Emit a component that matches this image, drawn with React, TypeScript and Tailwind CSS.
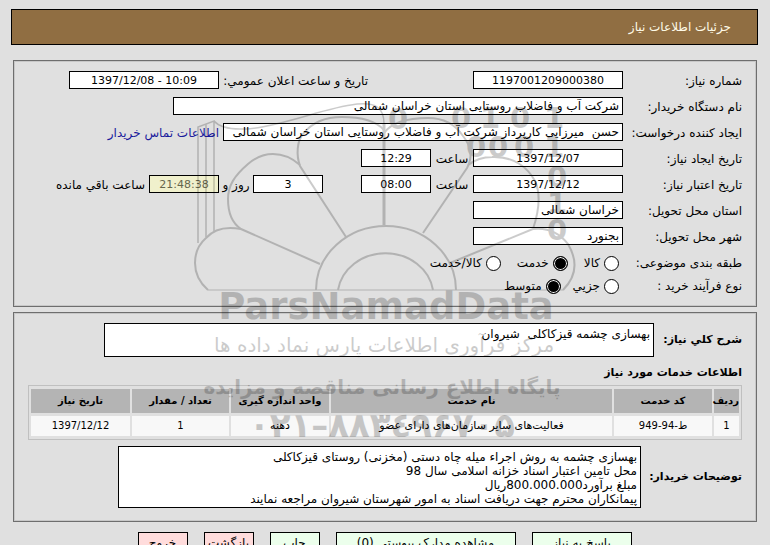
import type { ReactNode } from "react";

const box = "h-[18px] shrink-0 border border-black bg-white px-[3px] leading-4 text-black outline-none";
const textBox = `${box} text-[12px]`;
const numberBox = `${box} text-center text-[11px]`;
const area =
  "resize-none overflow-hidden border border-black bg-white px-[3px] text-[12px] leading-[14px] text-black outline-none";
const panel = "ml-0.5 mr-px border border-[#6e6e6e] px-[14px] pt-2.5 shadow-[inset_0_0_0_1px_#c8c8c8]";

function Row({ id, label, children }: { id: string; label: string; children: ReactNode }) {
  return (
    <div className="flex h-[18px] items-center">
      <label htmlFor={id} className="w-[119px] shrink-0 pt-0.5 whitespace-nowrap">
        {label}
      </label>
      {children}
    </div>
  );
}

function Radio({ name, label, checked }: { name: string; label: string; checked?: boolean }) {
  return (
    <label className="flex items-center gap-1 whitespace-nowrap">
      <input
        type="radio"
        name={name}
        defaultChecked={checked}
        className="size-[15px] shrink-0 appearance-none rounded-full border border-black bg-white checked:bg-black checked:shadow-[inset_0_0_0_1px_white]"
      />
      {label}
    </label>
  );
}

function Watermark() {
  return (
    <svg
      className="pointer-events-none absolute top-[95px] left-[190px] opacity-20"
      width="400"
      height="350"
      viewBox="190 95 400 350"
      direction="ltr"
      aria-hidden="true"
    >
      <g fill="none" stroke="black" strokeWidth="2">
        <path d="M208 290H563" strokeWidth="1" />
        <path d="M316 290A70 64 0 0 1 456 290M338 290A48 43 0 0 1 433 290" />
        <path d="M384 225V124" strokeWidth="3" />
        <path d="M346 237L300 166C296 155 297 141 303 134C313 121 327 117 342 117C360 117 376 121 384 130" />
        <path d="M423 233L467 168C473 157 471 146 463 136C455 124 442 118 428 118C410 118 392 122 384 133" />
        <path d="M300 165C291 157 283 154 273 154C262 154 255 158 248 164C234 176 228 186 228 199C228 213 232 223 241 229L320 264" />
        <path d="M468 165C476 159 484 157 492 157C514 156 528 168 535 181C541 194 539 211 533 229L450 263" />
        <path d="M241 229C225 226 213 230 206 238C198 245 195 254 195 263C195 275 200 283 208 290" />
        <path d="M533 229C550 227 561 235 568 244C578 261 576 277 563 290" />
        <path d="M198 243V127L214 121V231M206 237V124M214 121C222 130 238 131 262 127C300 120 325 108 357 104C376 102 384 108 384 124" strokeWidth="1.5" />
      </g>
      <g fill="black" className="font-['DejaVu_Sans'] font-bold">
        <g fontSize="29">
          <text x="388" y="129">0</text>
          <text x="451" y="128">0</text>
          <text x="480" y="128">1</text>
          <text x="510" y="128">0</text>
          <text x="544" y="128">1</text>
          <text x="466" y="157">0</text>
          <text x="488" y="157">0</text>
          <text x="514" y="157">0</text>
          <text x="544" y="157">1</text>
          <text x="547" y="187">0</text>
          <text x="547" y="213">1</text>
          <text x="547" y="240">0</text>
        </g>
        <text x="386" y="319" fontSize="37" textAnchor="middle">ParsNamadData</text>
        <text x="384" y="352" fontSize="20" textAnchor="middle" direction="rtl" fontWeight="400">
          مرکز فرآوری اطلاعات پارس نماد داده ها
        </text>
        <text x="382" y="394" fontSize="20" textAnchor="middle" direction="rtl">
          پایگاه اطلاع رسانی مناقصه و مزایده
        </text>
        <text x="382" y="437" fontSize="34" textAnchor="middle">۰۲۱–۸۸۳٤۹۶۷۰۵</text>
      </g>
    </svg>
  );
}

const columns = [
  { title: "رديف", value: "1", width: "w-[25px]", size: "text-[10px]" },
  { title: "کد خدمت", value: "ط-94-949", width: "w-[98px]", size: "text-[10px]" },
  { title: "نام خدمت", value: "فعالیت‌های سایر سازمان‌های دارای عضو", width: "", size: "text-[11px]" },
  { title: "واحد اندازه گیری", value: "دهنه", width: "w-[98px]", size: "text-[11px]" },
  { title: "تعداد / مقدار", value: "1", width: "w-[97px]", size: "text-[10px]" },
  { title: "تاریخ نیاز", value: "1397/12/12", width: "w-[99px]", size: "text-[10px]" },
];

const green = "bg-[#ecffec]";
const pink = "bg-[#ffdcdc]";
const actions = [
  { text: "پاسخ به نیاز", style: `w-[100px] ${green}` },
  { text: "مشاهده مدارک پیوستی (0)", style: `w-[180px] ${green}` },
  { text: "چاپ", style: `w-[50px] ${green}` },
  { text: "بازگشت", style: `w-[50px] ${pink}` },
  { text: "خروج", style: `w-[50px] ${pink}` },
];

export default function App() {
  return (
    <main
      dir="rtl"
      className="relative h-screen overflow-hidden bg-[#e0e0e0] pt-[9px] pr-3 pl-[11px] font-['DejaVu_Sans',sans-serif] text-[12px] leading-4 text-black"
    >
      <h1 className="flex h-9 items-center border border-black bg-[#906e42] px-[26px] text-[#fffbe8]">
        جزئیات اطلاعات نیاز
      </h1>

      <section className={`${panel} mt-[15px] flex h-[247px] flex-col gap-2`}>
        <Row id="number" label="شماره نیاز:">
          <input id="number" readOnly className={`${numberBox} w-[150px]`} value="1197001209000380" />
          <label htmlFor="announce" className="ms-[105px] w-[149px] pt-0.5 whitespace-nowrap">
            تاریخ و ساعت اعلان عمومي:
          </label>
          <input id="announce" dir="ltr" readOnly className={`${numberBox} w-[150px]`} value="1397/12/08 - 10:09" />
        </Row>
        <Row id="buyer" label="نام دستگاه خریدار:">
          <input id="buyer" readOnly className={`${textBox} w-[450px]`} value="شرکت آب و فاضلاب روستایی استان خراسان شمالی" />
        </Row>
        <Row id="creator" label="ایجاد کننده درخواست:">
          <input id="creator" readOnly className={`${textBox} w-[400px]`} value="حسن  میرزایی کارپرداز شرکت آب و فاضلاب روستایی استان خراسان شمالی" />
          <a href="#contact" className="ms-1 pt-0.5 whitespace-nowrap text-[#1a1a9c]">
            اطلاعات تماس خریدار
          </a>
        </Row>
        <Row id="created" label="تاریخ ایجاد نیاز:">
          <input id="created" dir="ltr" readOnly className={`${numberBox} w-[150px]`} value="1397/12/07" />
          <label htmlFor="createdTime" className="w-[42px] pt-0.5 text-center">ساعت</label>
          <input id="createdTime" dir="ltr" readOnly className={`${numberBox} w-[70px]`} value="12:29" />
        </Row>
        <Row id="expires" label="تاریخ اعتبار نیاز:">
          <input id="expires" dir="ltr" readOnly className={`${numberBox} w-[150px]`} value="1397/12/12" />
          <label htmlFor="expiresTime" className="w-[42px] pt-0.5 text-center">ساعت</label>
          <input id="expiresTime" dir="ltr" readOnly className={`${numberBox} w-[70px]`} value="08:00" />
          <input id="days" readOnly className={`${numberBox} ms-[38px] w-[70px]`} value="3" />
          <label htmlFor="days" className="w-[34px] pt-0.5 text-center whitespace-nowrap">روز و</label>
          <input
            id="remaining"
            dir="ltr"
            readOnly
            className="h-[18px] w-[70px] shrink-0 border border-black bg-[#f0f0cc] px-[3px] text-center text-[11px] text-[#66664c] outline-none"
            value="21:48:38"
          />
          <label htmlFor="remaining" className="ms-1 pt-0.5 whitespace-nowrap">ساعت باقي مانده</label>
        </Row>
        <Row id="province" label="استان محل تحویل:">
          <input id="province" readOnly className={`${textBox} w-[150px]`} value="خراسان شمالی" />
        </Row>
        <Row id="city" label="شهر محل تحویل:">
          <input id="city" readOnly className={`${textBox} w-[150px]`} value="بجنورد" />
        </Row>
        <div role="radiogroup" aria-label="طبقه بندی موضوعی" className="flex h-[18px] items-center pt-0.5">
          <span className="w-[123px] whitespace-nowrap">طبقه بندی موضوعی:</span>
          <div className="flex gap-4">
            <Radio name="category" label="کالا" />
            <Radio name="category" label="خدمت" checked />
            <Radio name="category" label="کالا/خدمت" />
          </div>
        </div>
        <div role="radiogroup" aria-label="نوع فرآیند خرید" className="-mt-[3px] flex h-[18px] items-center pt-0.5">
          <span className="w-[123px] whitespace-nowrap">نوع فرآیند خرید :</span>
          <div className="flex gap-3">
            <Radio name="process" label="جزیي" />
            <Radio name="process" label="متوسط" checked />
          </div>
        </div>
      </section>

      <section className={`${panel} mt-[5px] h-[210px]`}>
        <div className="flex items-center">
          <label htmlFor="summary" className="w-[88px] shrink-0 text-[11px] font-bold whitespace-nowrap">
            شرح کلي نیاز:
          </label>
          <textarea id="summary" readOnly className={`${area} h-[34px] w-[550px] pt-[3px]`} value="بهسازی چشمه قیزکاکلی  شیروان" />
        </div>
        <h2 className="mt-2 text-[11px] font-bold">اطلاعات خدمات مورد نیاز</h2>
        <table className="mt-1 w-full table-fixed border-separate border-spacing-x-[2px] border-spacing-y-[3px] border border-[#c0c0c0] text-center leading-4">
          <thead>
            <tr>
              {columns.map((c) => (
                <th key={c.title} scope="col" className={`${c.width} h-6 bg-[#b4b4b4] text-[10px] whitespace-nowrap`}>
                  {c.title}
                </th>
              ))}
            </tr>
          </thead>
          <tbody>
            <tr>
              {columns.map((c) => (
                <td key={c.title} className={`${c.size} h-5 bg-[#f8f8f8] whitespace-nowrap`}>
                  {c.value}
                </td>
              ))}
            </tr>
          </tbody>
        </table>
        <div className="mt-1.5 flex items-center">
          <label htmlFor="notes" className="w-[101px] shrink-0 text-[11px] font-bold whitespace-nowrap">
            توضیحات خریدار:
          </label>
          <textarea
            id="notes"
            readOnly
            className={`${area} h-[62px] w-[523px] pt-[3px]`}
            value={
              "بهسازی چشمه به روش اجراء میله چاه دستی (مخزنی) روستای قیزکاکلی\nمحل تامین اعتبار اسناد خزانه اسلامی سال 98\nمبلغ برآورد800.000.000ریال\nپیمانکاران محترم جهت دریافت اسناد به امور شهرستان شیروان مراجعه نمایند"
            }
          />
        </div>
      </section>

      <nav className="mt-2.5 flex justify-center gap-4">
        {actions.map((a) => (
          <button key={a.text} type="button" className={`h-[22px] border border-black whitespace-nowrap ${a.style}`}>
            {a.text}
          </button>
        ))}
      </nav>

      <Watermark />
    </main>
  );
}
